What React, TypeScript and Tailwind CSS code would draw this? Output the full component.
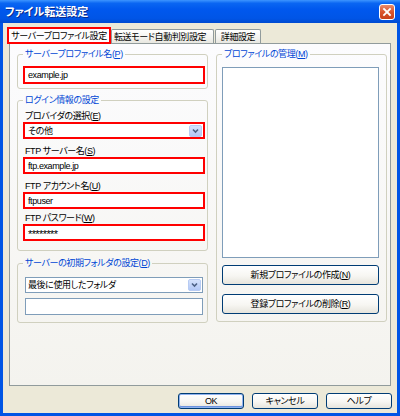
import React from "react";

function Arrow({ h = 12 }: { h?: number }) {
  return (
    <svg width="13" height={h} viewBox={`0 0 13 ${h}`} className="shrink-0">
      <defs>
        <linearGradient id="ag" x1="0" y1="0" x2="0" y2="1">
          <stop offset="0" stopColor="#D7E3FC" />
          <stop offset="1" stopColor="#B1C6F5" />
        </linearGradient>
      </defs>
      <rect x="0.5" y="0.5" width="12" height={h - 1} rx="1.5" fill="url(#ag)" stroke="#B7CBF3" />
      <path d={`M4 ${h / 2 - 1.5} L6.5 ${h / 2 + 1} L9 ${h / 2 - 1.5}`} fill="none" stroke="#4D6185" strokeWidth="1.6" />
    </svg>
  );
}

function Legend({ children }: { children: React.ReactNode }) {
  return <legend className="px-[2px] leading-[14px] text-[#0046D5] whitespace-nowrap">{children}</legend>;
}

function Label({ children, className = "" }: { children: React.ReactNode; className?: string }) {
  return <div className={"h-[12px] leading-[12px] whitespace-nowrap " + className}>{children}</div>;
}

function RedInput({ value, className = "" }: { value: React.ReactNode; className?: string }) {
  return (
    <div className={"h-[17px] border-2 border-[#FF0000] bg-white flex items-center pl-[3px] whitespace-nowrap " + className}>
      {value}
    </div>
  );
}

function XPButton({ children, className = "" }: { children: React.ReactNode; className?: string }) {
  return (
    <div
      className={
        "flex items-center justify-center whitespace-nowrap rounded-[3px] border border-[#003C74] bg-[linear-gradient(180deg,#FFFFFF_0%,#F7F6F2_55%,#E6E4DC_100%)] " +
        className
      }
    >
      {children}
    </div>
  );
}

export default function App() {
  return (
    <div className="w-[400px] h-[416px] overflow-hidden flex flex-col bg-[#0055E5] font-['Liberation_Sans','Noto_Sans_CJK_JP',sans-serif] text-[9px] leading-[12px] tracking-[-0.4px] text-black [font-feature-settings:'palt']">
      {/* Title bar */}
      <div className="h-[23px] shrink-0 flex items-center justify-between pl-[5px] pr-[5px] bg-[linear-gradient(180deg,#3D95FF_0%,#0A66F2_14%,#0058EE_40%,#0055E6_80%,#004AD0_100%)]">
        <span className="text-white font-bold text-[11px] leading-[14px] tracking-normal [text-shadow:1px_1px_0_#0A2A8C]">ファイル転送設定</span>
        <div className="w-[16px] h-[16px] rounded-[3px] border border-white bg-[linear-gradient(180deg,#E98B6C_0%,#D9542D_50%,#C8401A_100%)] flex items-center justify-center">
          <svg width="10" height="10" viewBox="0 0 10 10">
            <path d="M2 2 L8 8 M8 2 L2 8" stroke="white" strokeWidth="1.8" strokeLinecap="square" />
          </svg>
        </div>
      </div>

      {/* Body */}
      <div className="flex-1 mx-[3px] mb-[3px] bg-[#ECE9D8] flex flex-col">
        {/* Tabs */}
        <div className="h-[20px] shrink-0 flex items-end pl-[4px]">
          <div className="relative z-10 -mb-[1px] h-[17px] w-[104px] border-2 border-[#FF0000] bg-[#FCFCFE] flex items-center justify-center whitespace-nowrap overflow-hidden">
            サーバープロファイル設定
          </div>
          <div className="h-[14px] w-[103px] border border-b-0 border-[#919B9C] rounded-t-[2px] bg-[linear-gradient(180deg,#FFFFFF_0%,#F3F3EF_60%,#E8E7E0_100%)] flex items-center pl-[2px] whitespace-nowrap overflow-hidden">
            転送モード自動判別設定
          </div>
          <div className="ml-[1px] h-[14px] w-[46px] border border-b-0 border-[#919B9C] rounded-t-[2px] bg-[linear-gradient(180deg,#FFFFFF_0%,#F3F3EF_60%,#E8E7E0_100%)] flex items-center justify-center whitespace-nowrap overflow-hidden">
            詳細設定
          </div>
        </div>

        {/* Panel */}
        <div className="ml-[6px] w-[382px] h-[343px] shrink-0 border border-[#919B9C] bg-[linear-gradient(180deg,#FCFCFE_0%,#F4F3EE_100%)] flex items-start gap-[8px] pl-[7px] pt-[3px]">
          {/* Left column */}
          <div className="w-[191px] flex flex-col">
            <fieldset className="border border-[#D0D0BF] rounded-[3px] pl-[5px] pr-[2px] pb-[4px]">
              <Legend>
                サーバープロファイル名(<span className="underline">P</span>)
              </Legend>
              <RedInput value="example.jp" className="mt-[5px] h-[18px]" />
            </fieldset>

            <fieldset className="mt-[4px] border border-[#D0D0BF] rounded-[3px] pl-[5px] pr-[2px] pb-[9px]">
              <Legend>ログイン情報の設定</Legend>
              <Label className="mt-[3px] pl-[2px]">
                プロバイダの選択(<span className="underline">E</span>)
              </Label>
              <div className="h-[17px] border-2 border-[#FF0000] bg-white flex items-center justify-between pl-[3px] pr-[1px]">
                <span>その他</span>
                <Arrow h={12} />
              </div>
              <Label className="mt-[6px] pl-[2px]">
                FTP サーバー名(<span className="underline">S</span>)
              </Label>
              <RedInput value="ftp.example.jp" />
              <Label className="mt-[6px] pl-[2px]">
                FTP アカウント名(<span className="underline">U</span>)
              </Label>
              <RedInput value="ftpuser" />
              <Label className="mt-[3px] pl-[2px]">
                FTP パスワード(<span className="underline">W</span>)
              </Label>
              <RedInput value={<span className="text-[11px] leading-[11px] tracking-[-0.6px] pt-[3px]">********</span>} />
            </fieldset>

            <fieldset className="mt-[5px] border border-[#D0D0BF] rounded-[3px] pl-[5px] pr-[2px] pb-[7px]">
              <Legend>
                サーバーの初期フォルダの設定(<span className="underline">D</span>)
              </Legend>
              <div className="mt-[7px] mx-[2px] h-[16px] border border-[#7F9DB9] bg-white flex items-center justify-between pl-[2px] pr-[1px] whitespace-nowrap">
                <span>最後に使用したフォルダ</span>
                <Arrow h={12} />
              </div>
              <div className="mt-[5px] mx-[2px] h-[17px] border border-[#7F9DB9] bg-white" />
            </fieldset>
          </div>

          {/* Right column */}
          <fieldset className="w-[171px] border border-[#D0D0BF] rounded-[3px] pl-[5px] pr-[7px] pb-[7px]">
            <Legend>
              プロファイルの管理(<span className="underline">M</span>)
            </Legend>
            <div className="mt-[6px] h-[191px] border border-[#7F9DB9] bg-white" />
            <XPButton className="mt-[7px] h-[20px]">
              新規プロファイルの作成(<span className="underline">N</span>)
            </XPButton>
            <XPButton className="mt-[9px] h-[20px]">
              登録プロファイルの削除(<span className="underline">R</span>)
            </XPButton>
          </fieldset>
        </div>

        {/* Bottom buttons */}
        <div className="mt-[7px] flex justify-end gap-[8px] pr-[5px]">
          <XPButton className="w-[66px] h-[16px] shadow-[inset_0_0_0_1px_#8FB2EE,inset_0_-1px_0_1px_#6C93DE]">OK</XPButton>
          <XPButton className="w-[66px] h-[16px]">キャンセル</XPButton>
          <XPButton className="w-[66px] h-[16px]">ヘルプ</XPButton>
        </div>
      </div>
    </div>
  );
}
